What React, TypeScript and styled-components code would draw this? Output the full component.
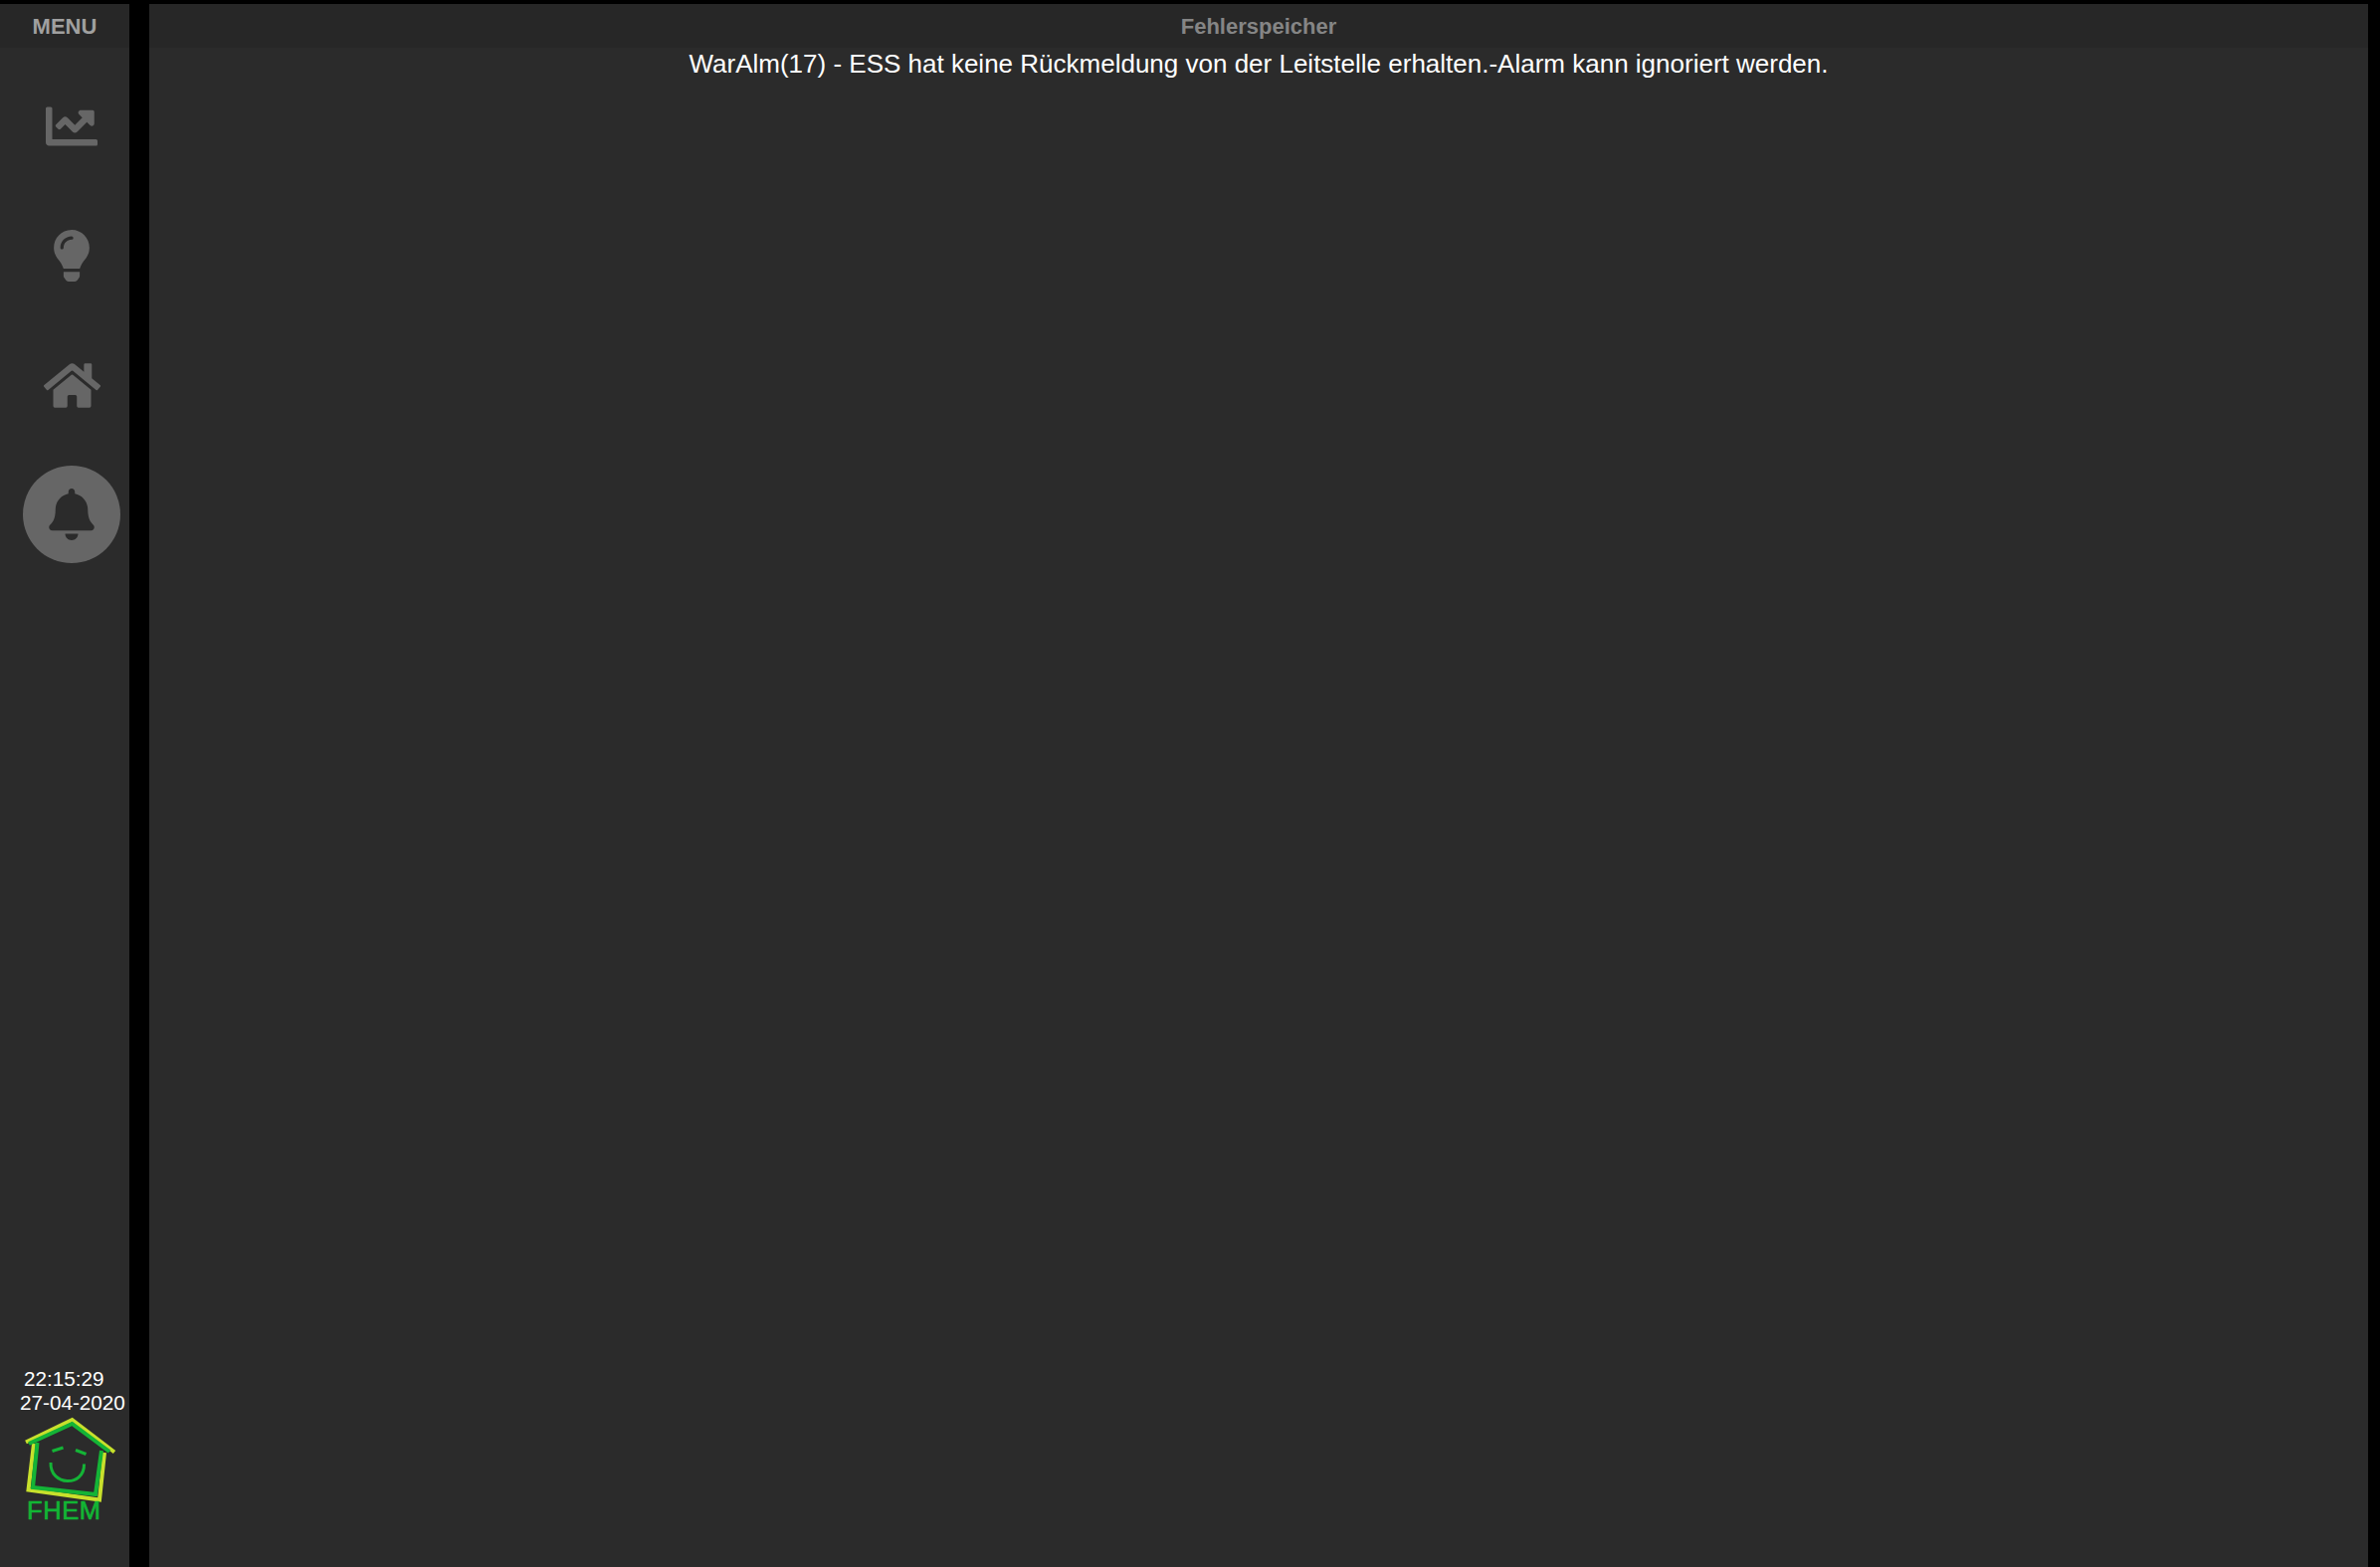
import React from "react";
import styled, { createGlobalStyle } from "styled-components";
import { FaBell, FaChartLine, FaHome, FaLightbulb } from "react-icons/fa";

const GlobalStyle = createGlobalStyle`
  html, body {
    margin: 0;
    padding: 0;
    height: 100%;
    background: #000;
    overflow: hidden;
    font-family: "Liberation Sans", Arial, sans-serif;
  }
`;

const Page = styled.div`
  width: 2392px;
  height: 1575px;
  box-sizing: border-box;
  padding: 4px 12px 0 0;
  display: flex;
  gap: 20px;
  background: #000;
`;

const Sidebar = styled.aside`
  width: 130px;
  display: flex;
  flex-direction: column;
  background: #2b2b2b;
`;

const Main = styled.main`
  flex: 1;
  background: #2b2b2b;
  display: flex;
  flex-direction: column;
`;

const Header = styled.div<{ $muted?: boolean }>`
  height: 44px;
  line-height: 45px;
  background: #272727;
  color: ${(p) => (p.$muted ? "#858585" : "#a0a0a0")};
  font-size: 22px;
  font-weight: bold;
  text-align: center;
`;

const Message = styled.div`
  color: #fff;
  font-size: 26px;
  line-height: 30px;
  padding-top: 1px;
  text-align: center;
`;

const Nav = styled.nav`
  display: flex;
  flex-direction: column;
  align-items: center;
  padding: 30px 0 0 14px;
  gap: 32px;
`;

const NavItem = styled.div<{ $active?: boolean }>`
  width: 98px;
  height: 98px;
  border-radius: 50%;
  display: flex;
  align-items: center;
  justify-content: center;
  background: ${(p) => (p.$active ? "#666" : "transparent")};
  color: ${(p) => (p.$active ? "#2b2b2b" : "#666")};
  font-size: 52px;
`;

const HomeIcon = styled(FaHome)`
  font-size: 57px;
`;

const Footer = styled.div`
  margin-top: auto;
  padding-bottom: 41px;
  color: #fff;
  font-size: 20.7px;
  line-height: 24px;
`;

const Time = styled.div`
  padding-left: 24px;
`;

const DateLine = styled.div`
  padding-left: 20px;
  white-space: nowrap;
`;

const Logo = styled.svg`
  display: block;
  width: 100px;
  height: 110px;
  margin: 2px 0 0 22px;
`;

const LogoText = styled.text`
  font-family: "Liberation Sans", Arial, sans-serif;
  font-size: 25.5px;
  letter-spacing: 0.6px;
  fill: #12b534;
  stroke: #12b534;
  stroke-width: 0.7px;
`;

function FhemLogo() {
  return (
    <Logo viewBox="0 0 100 110">
      <g fill="none" stroke="#c8e02c" strokeWidth="4">
        <path d="M4 25.5 L50.5 3 L93 35.5" />
        <path d="M12 27 L6.5 73.5 L78 83.5 L83 36" />
      </g>
      <g fill="none" stroke="#14b436" strokeWidth="4">
        <path d="M7 27 L50.5 7 L88 35" />
        <path d="M15.5 26 L11 71 L74 78 L80 34" />
      </g>
      <g fill="none" stroke="#14b436" strokeWidth="3">
        <path d="M30.5 34.5 L41.5 31 M54 33.5 L64.5 37.5" />
        <path d="M29 46 C28 70 63 71 62.5 47.5" />
      </g>
      <LogoText x="5" y="103">FHEM</LogoText>
    </Logo>
  );
}

export default function App() {
  return (
    <>
      <GlobalStyle />
      <Page>
        <Sidebar>
          <Header>MENU</Header>
          <Nav>
            <NavItem><FaChartLine /></NavItem>
            <NavItem><FaLightbulb /></NavItem>
            <NavItem><HomeIcon /></NavItem>
            <NavItem $active><FaBell /></NavItem>
          </Nav>
          <Footer>
            <Time>22:15:29</Time>
            <DateLine>27-04-2020</DateLine>
            <FhemLogo />
          </Footer>
        </Sidebar>
        <Main>
          <Header $muted>Fehlerspeicher</Header>
          <Message>WarAlm(17) - ESS hat keine Rückmeldung von der Leitstelle erhalten.-Alarm kann ignoriert werden.</Message>
        </Main>
      </Page>
    </>
  );
}
